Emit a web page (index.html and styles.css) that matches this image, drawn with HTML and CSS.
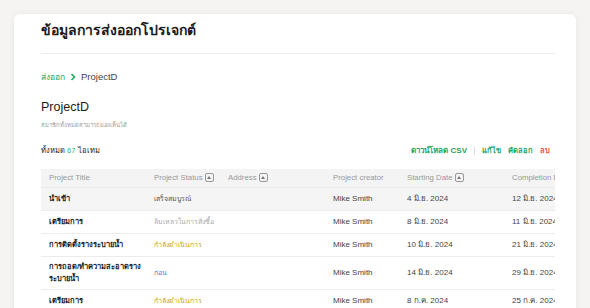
FILE: index.html
```html
<!DOCTYPE html>
<html lang="th">

<head>
    <meta charset="UTF-8">
    <meta name="viewport" content="width=device-width, initial-scale=1.0">
    <title>ข้อมูลการส่งออกโปรเจกต์</title>
    <link rel="stylesheet" href="styles.css">
</head>

<body>
    <div class="card">
        <h1 class="page-title">ข้อมูลการส่งออกโปรเจกต์</h1>

        <div class="crumbs">
            <span class="crumb-link">ส่งออก</span>
            <svg class="crumb-chevron" viewBox="0 0 6 8" width="6" height="8">
                <path d="M1.5 1 L4.5 4 L1.5 7" fill="none" stroke="#1fa463" stroke-width="1.6" />
            </svg>
            <span class="crumb-current">ProjectD</span>
        </div>

        <h2 class="project-name">ProjectD</h2>
        <p class="project-note">สมาชิกทั้งหมดสามารถมองเห็นได้</p>

        <div class="toolbar">
            <div class="count">ทั้งหมด <span class="count-num">67</span> ไอเทม</div>
            <div class="actions">
                <span class="act act-main">ดาวน์โหลด CSV</span>
                <span class="act-sep"></span>
                <span class="act">แก้ไข</span>
                <span class="act">คัดลอก</span>
                <span class="act act-danger">ลบ</span>
            </div>
        </div>

        <div class="table-wrap">
            <table class="grid">
                <colgroup>
                    <col class="w-wide">
                    <col class="w-narrow">
                    <col class="w-wide">
                    <col class="w-narrow">
                    <col class="w-wide">
                    <col class="w-wide">
                </colgroup>
                <thead>
                    <tr>
                        <th>Project Title</th>
                        <th>Project Status <i class="sort"></i></th>
                        <th>Address <i class="sort"></i></th>
                        <th>Project creator</th>
                        <th>Starting Date <i class="sort"></i></th>
                        <th>Completion Date <i class="sort"></i></th>
                    </tr>
                </thead>
                <tbody>
                    <tr class="hover">
                        <td class="name">นำเข้า</td>
                        <td class="status st-done">เสร็จสมบูรณ์</td>
                        <td></td>
                        <td>Mike Smith</td>
                        <td>4 มิ.ย. 2024</td>
                        <td>12 มิ.ย. 2024</td>
                    </tr>
                    <tr>
                        <td class="name">เตรียมการ</td>
                        <td class="status st-fail">ล้มเหลวในการสั่งซื้อ</td>
                        <td></td>
                        <td>Mike Smith</td>
                        <td>8 มิ.ย. 2024</td>
                        <td>11 มิ.ย. 2024</td>
                    </tr>
                    <tr>
                        <td class="name">การติดตั้งรางระบายน้ำ</td>
                        <td class="status st-progress">กำลังดำเนินการ</td>
                        <td></td>
                        <td>Mike Smith</td>
                        <td>10 มิ.ย. 2024</td>
                        <td>21 มิ.ย. 2024</td>
                    </tr>
                    <tr>
                        <td class="name">การถอด/ทำความสะอาดราง<br>ระบายน้ำ</td>
                        <td class="status st-before">ก่อน</td>
                        <td></td>
                        <td>Mike Smith</td>
                        <td>14 มิ.ย. 2024</td>
                        <td>29 มิ.ย. 2024</td>
                    </tr>
                    <tr>
                        <td class="name">เตรียมการ</td>
                        <td class="status st-progress">กำลังดำเนินการ</td>
                        <td></td>
                        <td>Mike Smith</td>
                        <td>8 ก.ค. 2024</td>
                        <td>25 ก.ค. 2024</td>
                    </tr>
                </tbody>
            </table>
        </div>
    </div>
</body>

</html>
```

FILE: styles.css
```css
body {
    margin: 0;
    height: 100vh;
    overflow: hidden;
    background-color: #f5f4f2;
    font-family: "Liberation Sans", "Noto Sans", sans-serif;
    color: #222;
}

.card {
    margin: 14px 14px 0 14px;
    padding: 0 21px 0 27px;
    height: 400px;
    background-color: #fff;
    border-radius: 6px;
    box-shadow: 0 0 6px rgba(0, 0, 0, 0.06);
}

.page-title {
    margin: 0;
    padding: 5px 0 12px;
    font-size: 14px;
    font-weight: bold;
    line-height: 22px;
    color: #1a1a1a;
    border-bottom: 1px solid #ececec;
}

/* -- breadcrumb -- */

.crumbs {
    display: flex;
    align-items: center;
    gap: 5px;
    margin-top: 16px;
    font-size: 9.5px;
    line-height: 14px;
}

.crumb-link {
    color: #1fa463;
    font-size: 8.5px;
}

.crumb-current {
    color: #444;
}

.project-name {
    margin: 14px 0 0;
    font-size: 12.5px;
    font-weight: 500;
    line-height: 18px;
    color: #1a1a1a;
}

.project-note {
    margin: 5px 0 0;
    font-size: 5.8px;
    line-height: 9px;
    color: #999;
}

/* -- count + actions -- */

.toolbar {
    display: flex;
    justify-content: space-between;
    align-items: center;
    margin-top: 15px;
    font-size: 7.5px;
    line-height: 12px;
}

.count-num {
    color: #2fb67a;
}

.actions {
    display: flex;
    align-items: center;
    gap: 7px;
    margin-right: 5px;
    font-size: 7.5px;
    font-weight: bold;
    color: #1fa463;
}

.act-main {
    font-size: 8px;
}

.act-sep {
    width: 1px;
    height: 8px;
    background-color: #ddd;
}

.act-danger {
    color: #e9553f;
}

/* -- table -- */

.table-wrap {
    margin-top: 12px;
    overflow: hidden;
}

.grid {
    table-layout: fixed;
    width: 568px;
    border-collapse: collapse;
    font-size: 8px;
    line-height: 12px;
    color: #444;
}

.w-wide {
    width: 105px;
}

.w-narrow {
    width: 74px;
}

.grid th {
    height: 18px;
    padding: 0 8px;
    text-align: left;
    font-weight: normal;
    font-size: 7.8px;
    color: #999;
    white-space: nowrap;
    background-color: #f4f4f4;
    border-bottom: 1px solid #eaeaea;
}

.grid td {
    height: 22px;
    padding: 0 8px;
    white-space: nowrap;
    border-bottom: 1px solid #ececec;
}

.grid td.name {
    font-weight: bold;
    font-size: 7.5px;
    color: #222;
    padding-top: 4px;
    padding-bottom: 4px;
    height: 14px;
}

.grid td.status {
    font-size: 7px;
}

.grid tr.hover td {
    background-color: #f5f5f5;
}

.sort {
    display: inline-block;
    position: relative;
    width: 7px;
    height: 7px;
    border: 1px solid #999;
    border-radius: 2px;
    vertical-align: -2px;
}

.sort::after {
    content: "";
    position: absolute;
    left: 1.5px;
    top: 2px;
    border-left: 2px solid transparent;
    border-right: 2px solid transparent;
    border-bottom: 3px solid #777;
}

.st-done {
    color: #555;
}

.st-fail {
    color: #aaa;
}

.st-progress {
    color: #c9a21a;
}

.st-before {
    color: #4a7fc0;
}
```
